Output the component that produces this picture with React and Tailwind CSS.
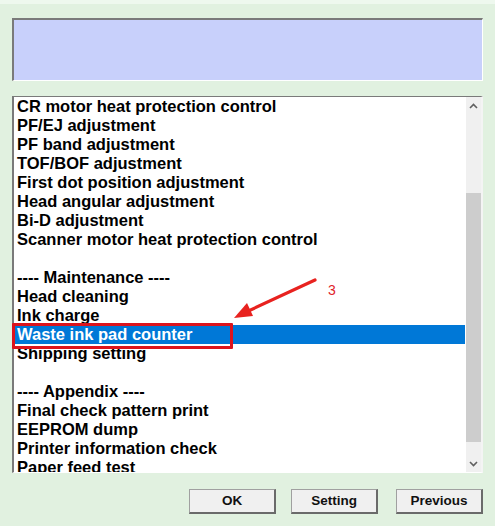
import React from 'react';

const items = [
  'CR motor heat protection control',
  'PF/EJ adjustment',
  'PF band adjustment',
  'TOF/BOF adjustment',
  'First dot position adjustment',
  'Head angular adjustment',
  'Bi-D adjustment',
  'Scanner motor heat protection control',
  '',
  '---- Maintenance ----',
  'Head cleaning',
  'Ink charge',
  'Waste ink pad counter',
  'Shipping setting',
  '',
  '---- Appendix ----',
  'Final check pattern print',
  'EEPROM dump',
  'Printer information check',
  'Paper feed test',
];

const SELECTED = 'Waste ink pad counter';

const Chevron = ({ up }) => (
  <svg width="9" height="6" viewBox="0 0 9 6">
    <path
      d={up ? 'M1 5 L4.5 1.5 L8 5' : 'M1 1 L4.5 4.5 L8 1'}
      fill="none"
      stroke="#606060"
      strokeWidth="1.6"
    />
  </svg>
);

const WinButton = ({ label, className = '' }) => (
  <button
    className={`w-[87px] h-[25px] bg-[#f0f0f0] border border-[#a0a0a0] border-r-2 border-b-2 border-r-[#6a6a6a] border-b-[#6a6a6a] text-[13.5px] font-bold text-[#111] leading-none ${className}`}
  >
    {label}
  </button>
);

export default function App() {
  return (
    <div
      className="w-[495px] h-[526px] bg-[#e1f1e0] flex flex-col"
      style={{ fontFamily: '"Liberation Sans", Arial, sans-serif' }}
    >
      <div className="h-[4px] bg-[#eef8ee]" />

      <div className="px-[12px] pt-[14px]">
        {/* Status box */}
        <div className="h-[63px] bg-[#c8d0fb] border-t-2 border-l-2 border-[#7a7a7a] border-b border-r border-b-white border-r-white" />

        {/* Menu list */}
        <div className="relative mt-[15px] h-[377px] bg-white border-t border-l-2 border-[#7a7a7a] border-b border-r-2 border-b-white border-r-[#f4f4f4] flex">
          <div className="flex-1 overflow-hidden">
            {items.map((text, i) => (
              <div
                key={i}
                className={`h-[19px] pl-[3px] text-[16.5px] font-bold leading-[19px] whitespace-nowrap ${
                  text === SELECTED ? 'bg-[#0078d7] text-white mr-[1px]' : 'text-black'
                }`}
              >
                {text}
              </div>
            ))}
          </div>

          {/* Scrollbar */}
          <div className="w-[15px] bg-[#f0f0f0] flex flex-col">
            <div className="h-[17px] flex items-center justify-center">
              <Chevron up />
            </div>
            <div className="flex-1">
              <div className="mt-[79px] h-[249px] bg-[#cdcdcd]" />
            </div>
            <div className="h-[17px] flex items-center justify-center">
              <Chevron />
            </div>
          </div>

          {/* Annotation */}
          <div className="absolute left-[-2px] top-[226px] w-[221px] h-[26px] border-[3px] border-[#dc141d] rounded-[1px]" />
          <svg className="absolute left-[216px] top-[180px]" width="110" height="50" viewBox="0 0 110 50">
            <line x1="85" y1="3" x2="14" y2="36" stroke="#e8221f" strokeWidth="3.2" strokeLinecap="round" />
            <polygon points="4,41 17,26 23,39" fill="#e8221f" />
          </svg>
          <span className="absolute left-[314px] top-[186px] text-[14px] text-[#e0242a] leading-none">3</span>
        </div>
      </div>

      {/* Buttons */}
      <div className="flex justify-end pr-[12px] mt-[16px]">
        <WinButton label="OK" />
        <WinButton label="Setting" className="ml-[15px]" />
        <WinButton label="Previous" className="ml-[18px]" />
      </div>
    </div>
  );
}
